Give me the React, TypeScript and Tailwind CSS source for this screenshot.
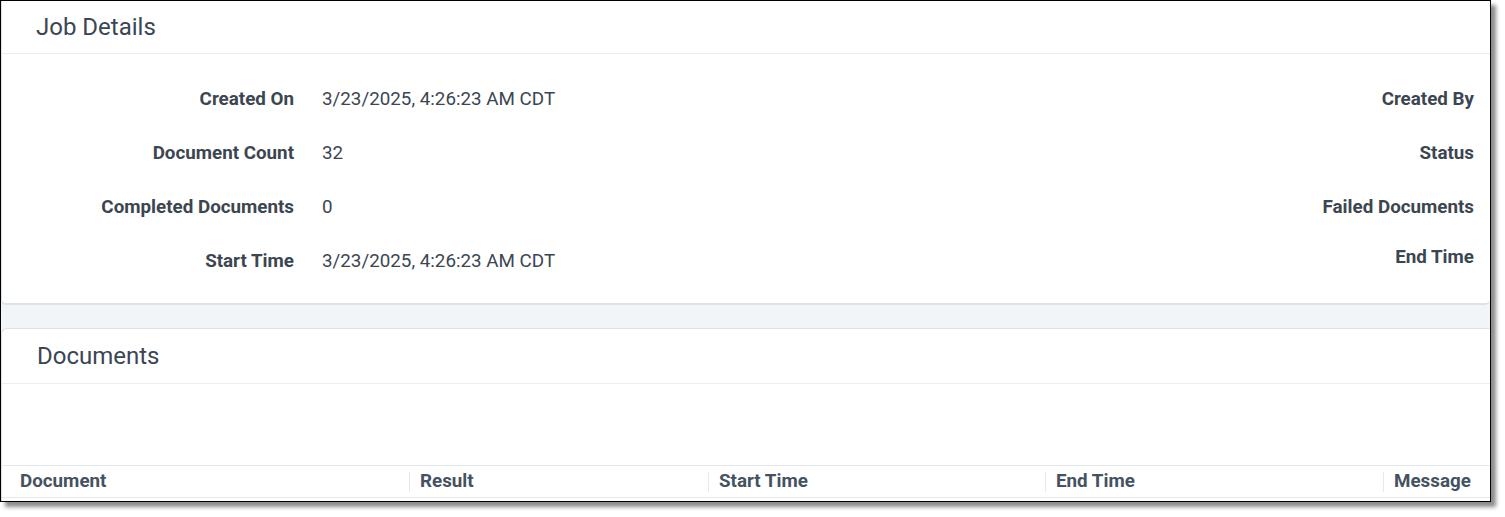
import React from 'react'

const font = { fontFamily: 'Roboto, "Liberation Sans", sans-serif' }

const leftRows = [
  { label: 'Created On', value: '3/23/2025, 4:26:23 AM CDT' },
  { label: 'Document Count', value: '32' },
  { label: 'Completed Documents', value: '0' },
  { label: 'Start Time', value: '3/23/2025, 4:26:23 AM CDT' },
]

const rightRows = ['Created By', 'Status', 'Failed Documents', 'End Time']

const columns = [
  { name: 'Document', w: 'w-[407px]' },
  { name: 'Result', w: 'w-[299px]' },
  { name: 'Start Time', w: 'w-[337px]' },
  { name: 'End Time', w: 'w-[338px]' },
  { name: 'Message', w: 'flex-1' },
]

export default function App() {
  return (
    <div className="h-[517px] w-[1505px] bg-white" style={font}>
      <div className="flex h-[502px] w-[1491px] flex-col overflow-hidden border border-black bg-[#f1f5f8] shadow-[5px_5px_4px_rgba(0,0,0,0.45)]">
        {/* Job details card */}
        <div className="h-[304px] rounded-b-[5px] border-b-2 border-l border-[#dbe3ea] bg-white">
          <div className="flex h-[53px] items-center border-b border-[#e8eef3] pl-[34px]">
            <h2 className="text-[24px] text-[#3a4653]">Job Details</h2>
          </div>
          <div className="flex pt-[18px]">
            <div className="flex flex-col">
              {leftRows.map((r) => (
                <div key={r.label} className="flex h-[54px] items-center text-[18.8px]">
                  <span className="w-[292px] text-right font-bold text-[#3b4651]">{r.label}</span>
                  <span className="pl-[28px] text-[#3b4651]">{r.value}</span>
                </div>
              ))}
            </div>
            <div className="ml-auto flex flex-col pr-[16px]">
              {rightRows.map((l, i) => (
                <div
                  key={l}
                  className={`flex h-[54px] justify-end text-[18.8px] font-bold text-[#3b4651] ${i === 3 ? 'items-start pt-[9px]' : 'items-center'}`}
                >
                  {l}
                </div>
              ))}
            </div>
          </div>
        </div>

        {/* Documents card */}
        <div className="mt-[23px] flex flex-1 flex-col rounded-tl-[6px] border-t border-l border-[#dbe3ea] bg-white">
          <div className="flex h-[55px] items-center border-b border-[#e8eef3] pl-[35px]">
            <h2 className="text-[24px] text-[#3a4653]">Documents</h2>
          </div>
          <div className="h-[81px]" />
          <div className="flex h-[33px] items-center border-y border-[#e3e9ef] text-[18.8px] font-bold text-[#45525f]">
            {columns.map((c, i) => (
              <div key={c.name} className={`flex h-[20px] items-center ${c.w} ${i === 0 ? 'pl-[18px]' : 'border-l border-[#e3e9ef] pl-[10px]'}`}>
                {c.name}
              </div>
            ))}
          </div>
        </div>
      </div>
    </div>
  )
}
